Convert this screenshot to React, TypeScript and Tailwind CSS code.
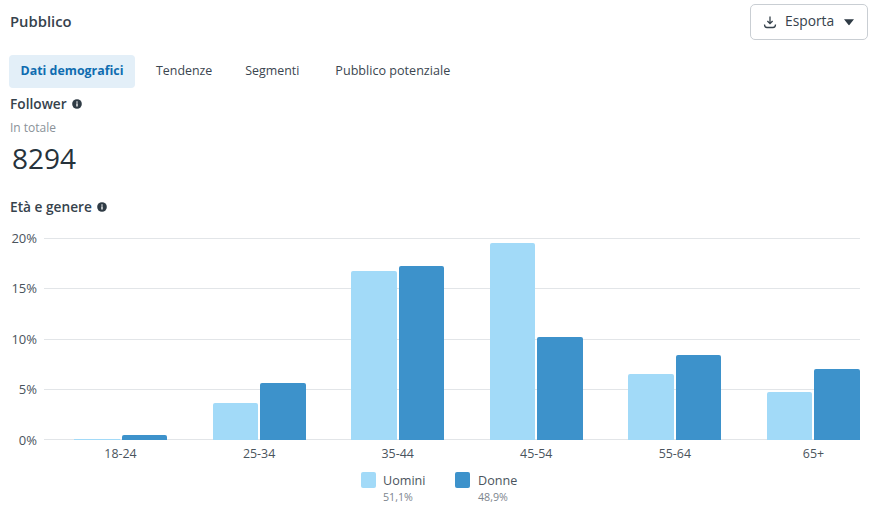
import React from "react";

const data = [
  { label: "18-24", men: 1, women: 5 },
  { label: "25-34", men: 37, women: 57 },
  { label: "35-44", men: 169, women: 174 },
  { label: "45-54", men: 197, women: 103 },
  { label: "55-64", men: 66, women: 85 },
  { label: "65+", men: 48, women: 71 },
];
const ticks = ["20%", "15%", "10%", "5%", "0%"];

function Info({ className }: { className: string }) {
  return (
    <svg viewBox="0 0 12 12" className={className}>
      <circle cx="6" cy="6" r="5.8" fill="#2f3b45" />
      <rect x="5.2" y="5.2" width="1.6" height="3.8" fill="#fff" />
      <rect x="5.2" y="2.9" width="1.6" height="1.5" fill="#fff" />
    </svg>
  );
}

export default function App() {
  return (
    <div className="w-[874px] h-[513px] overflow-hidden bg-white font-['Open_Sans',sans-serif] text-[#2f3b45]">
      <div className="flex items-center justify-between pl-[10px] pr-[6px] pt-[4px] h-[40px]">
        <div className="text-[14.8px] font-semibold leading-[18px] -mt-[2px] text-[#36424c]">Pubblico</div>
        <button className="flex items-center w-[118px] h-[36px] pl-[12px] border border-[#c9ced3] rounded-[5px] bg-white text-[13.8px] text-[#36424c]">
          <svg viewBox="0 0 14 14" className="w-[14px] h-[14px]" fill="none" stroke="#36424c" strokeWidth="1.3">
            <path d="M7 1.5v7M4.4 6 7 8.6 9.6 6" />
            <path d="M1.5 9.5c0 2 1 3 2.5 3h6c1.5 0 2.5-1 2.5-3" />
          </svg>
          <span className="ml-[8px] -mt-[2px]">Esporta</span>
          <svg viewBox="0 0 12 8" className="ml-[9px] w-[12px] h-[8px]">
            <path d="M1 1.2h10L6.8 6.6a1 1 0 0 1-1.6 0z" fill="#2f3b45" />
          </svg>
        </button>
      </div>

      <div className="flex items-center h-[33px] mt-[15px] ml-[9px] text-[12.4px] text-[#3b4650]">
        <div className="flex items-center justify-center w-[126px] h-full rounded-[4px] bg-[#e3eff8] font-bold text-[#0f6cb0]">Dati demografici</div>
        <div className="ml-[21px]">Tendenze</div>
        <div className="ml-[33px]">Segmenti</div>
        <div className="ml-[36px] text-[12.6px]">Pubblico potenziale</div>
      </div>

      <div className="flex items-center gap-[5px] ml-[10px] mt-[7px] h-[18px] text-[13.7px] font-semibold leading-[18px] text-[#36424c]">
        Follower <Info className="w-[10px] h-[10px]" />
      </div>
      <div className="ml-[10px] mt-[6px] h-[18px] text-[12px] leading-[18px] text-[#8a9299]">In totale</div>
      <div className="ml-[12px] mt-[3px] h-[36px] text-[28px] leading-[36px] text-[#26323b]">8294</div>
      <div className="flex items-center gap-[5px] ml-[10px] mt-[22px] h-[18px] text-[13.7px] font-semibold leading-[18px] text-[#36424c]">
        Età e genere <Info className="w-[10px] h-[10px]" />
      </div>

      <div className="flex mt-[22px] ml-[10px] mr-[14px]">
        <div className="flex flex-col justify-between h-[202px] w-[27px] text-right text-[13px] leading-none text-[#4a545d]">
          {ticks.map((t) => (
            <div key={t} className="h-0 flex items-center justify-end">{t}</div>
          ))}
        </div>
        <div className="flex-1 ml-[7px]">
          <div className="relative h-[202px]">
            <div className="absolute inset-0 flex flex-col justify-between">
              {ticks.map((t) => (
                <div key={t} className="h-px bg-[#e2e5e8]" />
              ))}
            </div>
            <div className="relative flex items-end justify-between h-full pl-[30px]">
              {data.map((d) => (
                <div key={d.label} className="flex items-end gap-[2px] w-[93px]">
                  <div className={d.men > 2 ? "flex-1 rounded-t-[2px] bg-[#a2daf8]" : "flex-1 bg-[#a2daf8]"} style={{ height: d.men }} />
                  <div className="flex-1 rounded-t-[2px] bg-[#3d92cb]" style={{ height: d.women }} />
                </div>
              ))}
            </div>
          </div>
          <div className="flex justify-between pl-[30px] mt-[5px] text-[12.4px] leading-[18px] text-[#4a545d]">
            {data.map((d) => (
              <div key={d.label} className="w-[93px] text-center">{d.label}</div>
            ))}
          </div>
        </div>
      </div>

      <div className="flex mt-[8px] ml-[361px] text-[12.6px] text-[#4a545d]">
        <div className="flex w-[94px]">
          <div className="w-[15px] h-[16px] mt-[1px] rounded-[2px] bg-[#a2daf8]" />
          <div className="ml-[7px] pt-[1px]">
            <div className="leading-[18px]">Uomini</div>
            <div className="text-[10.7px] leading-[14px] text-[#7c858d]">51,1%</div>
          </div>
        </div>
        <div className="flex">
          <div className="w-[15px] h-[16px] mt-[1px] rounded-[2px] bg-[#3d92cb]" />
          <div className="ml-[8px] pt-[1px]">
            <div className="leading-[18px]">Donne</div>
            <div className="text-[10.7px] leading-[14px] text-[#7c858d]">48,9%</div>
          </div>
        </div>
      </div>
    </div>
  );
}
